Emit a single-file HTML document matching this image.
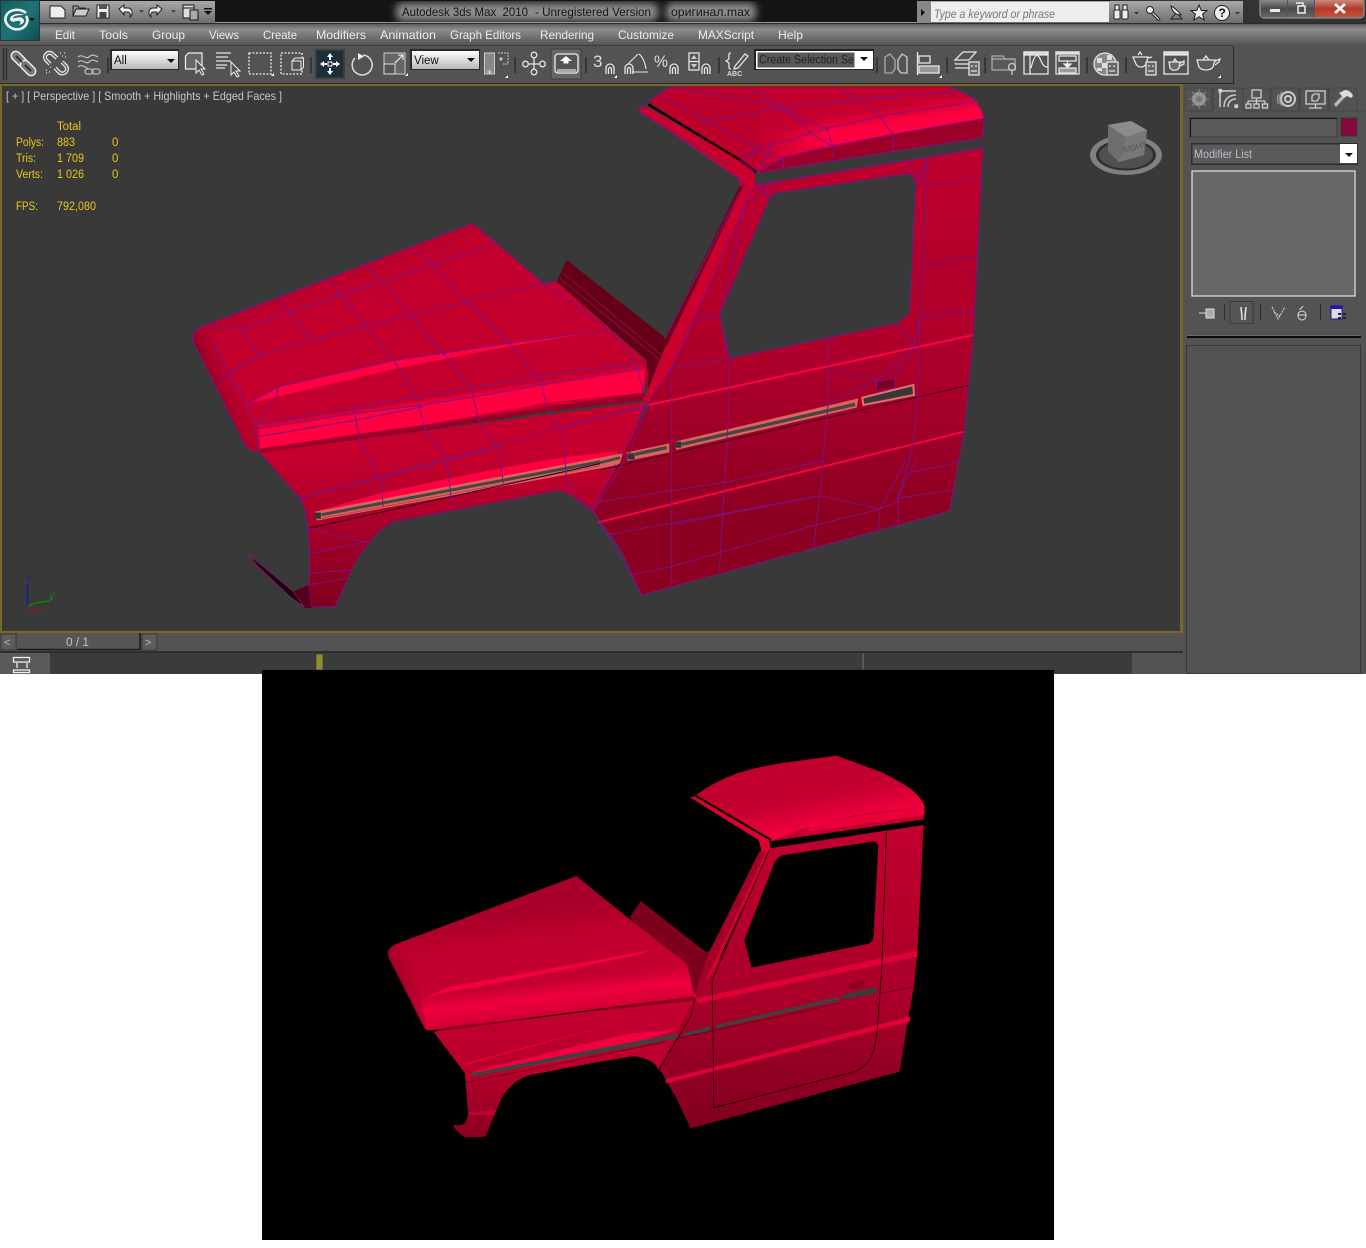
<!DOCTYPE html>
<html><head><meta charset="utf-8"><style>
html,body{margin:0;padding:0;background:#fff;width:1366px;height:1248px;overflow:hidden}
svg{display:block;position:absolute;left:0;top:0}
text{font-family:"Liberation Sans","Noto Sans CJK SC",sans-serif;white-space:pre}
.m{font-size:12px;fill:#ececec}
.y{font-size:11.5px;fill:#e6c820}
.i{fill:none;stroke:#e4e4e4;stroke-width:1.3}
.w{fill:none;stroke:#7c1280;stroke-width:3}
.s{stroke:#2e2e2e;stroke-width:1.5}
</style></head><body>
<svg width="1366" height="1248" viewBox="0 0 1366 1248" xmlns="http://www.w3.org/2000/svg">
<defs>
<linearGradient id="menu" x1="0" y1="0" x2="0" y2="1"><stop offset="0" stop-color="#5c5c5c"/><stop offset=".25" stop-color="#8c8c8c"/><stop offset="1" stop-color="#555"/></linearGradient>
<linearGradient id="qa" x1="0" y1="0" x2="0" y2="1"><stop offset="0" stop-color="#a8a8a8"/><stop offset="1" stop-color="#6e6e6e"/></linearGradient>
<linearGradient id="combo" x1="0" y1="0" x2="0" y2="1"><stop offset="0" stop-color="#fff"/><stop offset="1" stop-color="#b8b8b8"/></linearGradient>
<linearGradient id="teal" x1="0" y1="0" x2="1" y2="1"><stop offset="0" stop-color="#0f5f62"/><stop offset=".5" stop-color="#1c7477"/><stop offset="1" stop-color="#0c4e52"/></linearGradient>
<linearGradient id="close" x1="0" y1="0" x2="0" y2="1"><stop offset="0" stop-color="#c98a80"/><stop offset=".5" stop-color="#b33a28"/><stop offset="1" stop-color="#c8503a"/></linearGradient>
<linearGradient id="winb" x1="0" y1="0" x2="0" y2="1"><stop offset="0" stop-color="#8a8a8a"/><stop offset=".5" stop-color="#4a4a4a"/><stop offset="1" stop-color="#666"/></linearGradient>
<linearGradient id="hood" gradientUnits="userSpaceOnUse" x1="420" y1="90" x2="500" y2="290"><stop offset="0" stop-color="#9c0028"/><stop offset=".6" stop-color="#bf002c"/><stop offset="1" stop-color="#c4002e"/></linearGradient>
<linearGradient id="nose" gradientUnits="userSpaceOnUse" x1="60" y1="500" x2="180" y2="450"><stop offset="0" stop-color="#6a0020"/><stop offset=".5" stop-color="#b0002a"/><stop offset="1" stop-color="#c4002e"/></linearGradient>
<linearGradient id="bright" gradientUnits="userSpaceOnUse" x1="800" y1="525" x2="810" y2="590"><stop offset="0" stop-color="#c4002e"/><stop offset=".3" stop-color="#ff0040"/><stop offset="1" stop-color="#ff0040"/></linearGradient>
<linearGradient id="side" gradientUnits="userSpaceOnUse" x1="0" y1="0" x2="0" y2="1530"><stop offset="0" stop-color="#c2002e"/><stop offset=".55" stop-color="#ad002a"/><stop offset=".85" stop-color="#8c0022"/><stop offset="1" stop-color="#8c0022"/></linearGradient>
<linearGradient id="fender" gradientUnits="userSpaceOnUse" x1="0" y1="700" x2="0" y2="1170"><stop offset="0" stop-color="#c6002e"/><stop offset=".5" stop-color="#a60028"/><stop offset="1" stop-color="#7c001e"/></linearGradient>
<linearGradient id="roof" gradientUnits="userSpaceOnUse" x1="800" y1="40" x2="815" y2="135"><stop offset="0" stop-color="#c2002e"/><stop offset=".4" stop-color="#c8002f"/><stop offset=".9" stop-color="#ff0040"/></linearGradient>
<linearGradient id="roofl" gradientUnits="userSpaceOnUse" x1="470" y1="0" x2="690" y2="0"><stop offset="0" stop-color="#bc002c"/><stop offset="1" stop-color="#c4002e" stop-opacity="0"/></linearGradient>
<linearGradient id="bside" gradientUnits="userSpaceOnUse" x1="0" y1="260" x2="0" y2="1160"><stop offset="0" stop-color="#c0002e"/><stop offset=".6" stop-color="#a80029"/><stop offset="1" stop-color="#80001e"/></linearGradient>
<linearGradient id="bfend" gradientUnits="userSpaceOnUse" x1="0" y1="780" x2="0" y2="1190"><stop offset="0" stop-color="#c4002e"/><stop offset=".5" stop-color="#b8002c"/><stop offset="1" stop-color="#8a0022"/></linearGradient>
<linearGradient id="broof" gradientUnits="userSpaceOnUse" x1="1150" y1="50" x2="1200" y2="280"><stop offset="0" stop-color="#bf002c"/><stop offset=".55" stop-color="#c4002e"/><stop offset="1" stop-color="#f8003e"/></linearGradient>
<linearGradient id="bhood" gradientUnits="userSpaceOnUse" x1="500" y1="500" x2="540" y2="820"><stop offset="0" stop-color="#a80029"/><stop offset=".3" stop-color="#c0002d"/><stop offset=".68" stop-color="#c4002e"/><stop offset=".82" stop-color="#ee003c"/><stop offset=".94" stop-color="#dc0036"/><stop offset="1" stop-color="#c8002f"/></linearGradient>
<linearGradient id="bnose" gradientUnits="userSpaceOnUse" x1="20" y1="770" x2="140" y2="720"><stop offset="0" stop-color="#70001e"/><stop offset="1" stop-color="#c0002c" stop-opacity="0"/></linearGradient>
<filter id="b2"><feGaussianBlur stdDeviation="4"/></filter>
<filter id="b1"><feGaussianBlur stdDeviation=".5"/></filter>
</defs>

<!-- page -->
<rect width="1366" height="1248" fill="#fff"/>
<rect x="0" y="0" width="1366" height="674" fill="#535353"/>

<!-- title bar -->
<rect x="0" y="0" width="1366" height="23" fill="#141414"/>
<rect x="1110" y="0" width="256" height="23" fill="#333"/>
<rect x="215" y="22" width="702" height="1" fill="#9a9a9a"/>
<rect x="0" y="23" width="1366" height="1" fill="#2c2c2c"/>
<rect x="396" y="3" width="262" height="18" rx="6" fill="#8c8c8c" filter="url(#b2)"/>
<rect x="666" y="3" width="90" height="18" rx="6" fill="#8c8c8c" filter="url(#b2)"/>
<text x="402" y="16" font-size="12" fill="#161616" textLength="126" lengthAdjust="spacingAndGlyphs">Autodesk 3ds Max  2010</text>
<text x="535" y="16" font-size="12" fill="#161616" textLength="116" lengthAdjust="spacingAndGlyphs">- Unregistered Version</text>
<text x="671" y="16" font-size="12" fill="#161616" textLength="79" lengthAdjust="spacingAndGlyphs">оригинал.max</text>

<!-- menu -->
<rect x="0" y="24" width="1366" height="21" fill="url(#menu)"/>
<text class="m" x="55" y="39" textLength="20" lengthAdjust="spacingAndGlyphs">Edit</text>
<text class="m" x="99" y="39" textLength="29" lengthAdjust="spacingAndGlyphs">Tools</text>
<text class="m" x="152" y="39" textLength="33" lengthAdjust="spacingAndGlyphs">Group</text>
<text class="m" x="209" y="39" textLength="30" lengthAdjust="spacingAndGlyphs">Views</text>
<text class="m" x="263" y="39" textLength="34" lengthAdjust="spacingAndGlyphs">Create</text>
<text class="m" x="316" y="39" textLength="50" lengthAdjust="spacingAndGlyphs">Modifiers</text>
<text class="m" x="380" y="39" textLength="56" lengthAdjust="spacingAndGlyphs">Animation</text>
<text class="m" x="450" y="39" textLength="71" lengthAdjust="spacingAndGlyphs">Graph Editors</text>
<text class="m" x="540" y="39" textLength="54" lengthAdjust="spacingAndGlyphs">Rendering</text>
<text class="m" x="618" y="39" textLength="56" lengthAdjust="spacingAndGlyphs">Customize</text>
<text class="m" x="698" y="39" textLength="56" lengthAdjust="spacingAndGlyphs">MAXScript</text>
<text class="m" x="778" y="39" textLength="25" lengthAdjust="spacingAndGlyphs">Help</text>

<!-- quick access -->
<rect x="40" y="1" width="175" height="22" fill="url(#qa)"/>
<g fill="#eee" stroke="#222" stroke-width="1">
<path d="M50,6h11l4,4v8h-15z"/>
<path d="M73,16l3,-7h13l-3,7z" fill="#ccc"/><path d="M73,16v-10h5l1,2h6v1" fill="none"/>
<rect x="97" y="5" width="12" height="13"/>
</g>
<rect x="99" y="5" width="8" height="4" fill="#555"/><rect x="99.500" y="12" width="7" height="6" fill="#444"/>
<path d="M119,9l5,-4v3h4c5,0 5,7 2,9c1,-4 -1,-5 -3,-5h-3v3z" fill="#eee" stroke="#222"/>
<path d="M162,9l-5,-4v3h-4c-5,0 -5,7 -2,9c-1,-4 1,-5 3,-5h3v3z" fill="#eee" stroke="#222"/>
<path d="M139,10h5l-2.500,3z M171,10h5l-2.500,3z" fill="#444"/>
<g fill="none" stroke="#222" stroke-width="1.100"><rect x="183" y="5" width="11" height="13" fill="#ddd"/><path d="M183,8h11"/><rect x="190" y="10" width="8" height="10" fill="#aaa"/></g>
<path d="M204,8h8v1.500h-8z M204,11h8l-4,4z" fill="#111"/>

<!-- logo -->
<rect x="0" y="0" width="40" height="41" fill="#333"/>
<rect x="1" y="1" width="38" height="39" fill="url(#teal)"/>
<path d="M26,13C20,8 9,9 6,16C3,24 12,31 20,29C27,27 29,20 26,16" fill="none" stroke="#f2f2f2" stroke-width="2.600"/>
<path d="M24,15C18,12 10,15 10,19C10,22 14,22 17,21C20,20 22,22 19,25C24,24 26,20 22,18C18,16 15,19 13,18C13,16 18,15 24,15Z" fill="#f2f2f2"/>
<path d="M29,18h6l-3,3.500z" fill="#111"/>

<!-- info center -->
<rect x="917" y="1" width="326" height="22" fill="url(#qa)"/>
<rect x="917" y="1" width="14" height="22" fill="#888"/>
<path d="M921,9l4,3.500l-4,3.500z" fill="#111"/>
<rect x="931" y="2" width="178" height="20" fill="#eee"/>
<text x="934" y="18" font-size="11.500" font-style="italic" fill="#777" textLength="121" lengthAdjust="spacingAndGlyphs">Type a keyword or phrase</text>
<g fill="#eee" stroke="#222" stroke-width="1">
<rect x="1114" y="10" width="6" height="9" rx="1"/><rect x="1122" y="10" width="6" height="9" rx="1"/><rect x="1115" y="5" width="4" height="5"/><rect x="1123" y="5" width="4" height="5"/>
<circle cx="1150" cy="10" r="3.500"/><path d="M1153,12l7,7l-1.500,1.500l-7,-7z"/>
<path d="M1171,6c1,6 5,9 10,9c-1,-2 -6,-7 -10,-9z"/><path d="M1176,13l-5,6h11l-4,-5" fill="none"/>
<path d="M1199,5l2.300,5.500h5.700l-4.500,3.700l1.700,5.800l-5.200,-3.300l-5.200,3.300l1.700,-5.800l-4.500,-3.700h5.700z"/>
<circle cx="1222" cy="13" r="7.500"/>
</g>
<text x="1218.500" y="17" font-size="12" font-weight="bold" fill="#111">?</text>
<path d="M1134,12h5l-2.500,2.500z M1235,12h5l-2.500,2.500z" fill="#333"/>

<!-- window buttons -->
<rect x="1260" y="-3" width="104" height="21" rx="4" fill="#555" stroke="#aaa"/>
<rect x="1261" y="0" width="26" height="17" fill="url(#winb)"/>
<rect x="1288" y="0" width="26" height="17" fill="url(#winb)"/>
<rect x="1315" y="0" width="48" height="17" fill="url(#close)"/>
<rect x="1270" y="9" width="10" height="3" fill="#eee"/>
<path d="M1298,6h7v7h-7z M1296,3h7v3" fill="none" stroke="#eee" stroke-width="1.500"/>
<path d="M1335,4l10,9M1345,4l-10,9" stroke="#f4f4f4" stroke-width="2.800" fill="none"/>

<!-- main toolbar -->
<rect x="0" y="45" width="1366" height="39" fill="#535353"/>
<rect x="0" y="45" width="1233" height="1" fill="#3a3a3a"/>
<rect x="1233" y="46" width="1" height="38" fill="#2a2a2a"/>
<rect x="0" y="83" width="1233" height="1" fill="#2a2a2a"/>
<path d="M3.500,48v32M6.500,48v32" stroke="#2a2a2a" stroke-width="1.300"/>
<path d="M108,57v16M311,57v16M515,57v16M586,57v16M719,57v16M877,57v16M947,57v16M985,57v16M1087,57v16M1126,57v16" class="s" fill="none"/>

<!-- link -->
<g fill="#777" stroke="#eee" stroke-width="1.500">
<rect x="10" y="54.500" width="18" height="9" rx="4.500" transform="rotate(45 19 59)"/>
<rect x="19" y="63.500" width="18" height="9" rx="4.500" transform="rotate(45 28 68)"/>
</g>
<path d="M16,56l6,6M25,65l6,6" stroke="#333" stroke-width="2"/>
<!-- unlink -->
<g fill="none">
<path d="M50,64L46,60C43,56 47,52 51,53L57,58" stroke="#eee" stroke-width="4"/>
<path d="M50,64L46,60C43,56 47,52 51,53L57,58" stroke="#666" stroke-width="1.600"/>
<path d="M62,62L66,66C69,70 65,75 60,73L55,68" stroke="#eee" stroke-width="4"/>
<path d="M62,62L66,66C69,70 65,75 60,73L55,68" stroke="#666" stroke-width="1.600"/>
<path d="M60,53h1M64,53h1M62,56h1M65,57h1M46,70h1M49,72h1M46,73h1M50,67h1" stroke="#ddd" stroke-width="1.300"/>
</g>
<!-- bind -->
<g class="i" style="stroke:#bbb">
<path d="M78,57c4,-4 8,3 11,0s5,-2 9,0M78,62c4,-4 8,3 11,0s5,-2 9,0M78,67c4,-4 8,2 10,1"/>
<rect x="85" y="69" width="8" height="5" rx="2.500"/><rect x="92" y="69" width="8" height="5" rx="2.500"/>
</g>

<!-- combo All -->
<rect x="110" y="49" width="69" height="21" fill="#2a2a2a"/>
<rect x="112" y="51" width="66" height="18" fill="url(#combo)"/>
<text x="114" y="64" font-size="11.500" fill="#111">All</text>
<path d="M167,59h8l-4,4z" fill="#111"/>

<!-- select icons -->
<path d="M185.500,56l3,-3h13.500v16h-16.500z" fill="#666" stroke="#eee" stroke-width="1.200"/>
<path d="M216,53h15M216,57h12M216,61h15M216,65h11M216,68h9" class="i"/>
<path d="M196,60l0,13l3,-3l3,5l2,-1l-3,-5h4z" fill="#535353" stroke="#eee"/>
<path d="M231,62l0,13l3,-3l3,5l2,-1l-3,-5h4z" fill="#535353" stroke="#eee"/>
<rect x="249" y="53" width="22" height="21" fill="none" stroke="#eee" stroke-dasharray="2 1.500" stroke-width="1.300"/>
<path d="M271,76l3,-3v3z" fill="#fff"/>
<rect x="281" y="53" width="21" height="21" fill="none" stroke="#eee" stroke-dasharray="2 1.500" stroke-width="1.300"/>
<path d="M292,61h9v9h-9z M292,61l3,-3h8.500v9l-2.500,3" fill="#555" stroke="#eee"/>

<!-- move -->
<rect x="315" y="49" width="30" height="30" fill="#3c3c3c"/>
<rect x="317" y="51" width="26" height="26" fill="#1d2d3b"/>
<rect x="328" y="62" width="4" height="4" fill="none" stroke="#fff"/>
<path d="M330,53l-3,4h2v3h2v-3h2z M330,75l-3,-4h2v-3h2v3h2z M320,64l4,-3v2h3v2h-3v2z M340,64l-4,-3v2h-3v2h3v2z" fill="#fff"/>
<!-- rotate -->
<path d="M363,55a10,10 0 1 1 -8,3" fill="none" stroke="#ddd" stroke-width="1.500"/>
<path d="M358,53l6,3.500l-6,3.500z" fill="#eee"/>
<!-- scale -->
<rect x="384" y="53" width="21" height="21" fill="#666" stroke="#ccc"/>
<rect x="384" y="64" width="11" height="10" fill="#555" stroke="#ddd"/>
<path d="M395,63l8,-8M398,55h5v5" fill="none" stroke="#fff"/>
<path d="M405,76l3,-3v3z" fill="#fff"/>

<!-- combo View -->
<rect x="410" y="49" width="70" height="21" fill="#2a2a2a"/>
<rect x="412" y="51" width="67" height="18" fill="url(#combo)"/>
<text x="414" y="64" font-size="11.500" fill="#111">View</text>
<path d="M467,58h8l-4,4z" fill="#111"/>

<!-- pivot -->
<rect x="484.500" y="53" width="10" height="21" fill="#888" stroke="#ccc"/>
<path d="M498,53h10v11h-5" fill="none" stroke="#ccc" stroke-dasharray="2 1"/><path d="M499,59h4M501,57v4M487,72h5M489.500,69.500v5" stroke="#ddd" fill="none"/>
<path d="M505,78l3,-3v3z" fill="#fff"/>
<!-- manipulate -->
<g class="i"><path d="M534,52v22M523,64h22"/><circle cx="534" cy="55" r="2.800" fill="#535353"/><circle cx="534" cy="72" r="2.800" fill="#535353"/><circle cx="525.500" cy="64" r="2.800" fill="#535353"/><circle cx="542.500" cy="64" r="2.800" fill="#535353"/></g>
<!-- kbd -->
<rect x="551" y="49" width="30" height="30" fill="#686868" stroke="#3c3c3c"/>
<rect x="555" y="54" width="23" height="19" rx="3" fill="#555" stroke="#eee" stroke-width="1.300"/>
<rect x="557" y="69" width="19" height="3" fill="#aaa"/>
<path d="M566,56l6,5h-3.500v2.500h-5v-2.500h-3.500z" fill="#fff"/>
<!-- snaps -->
<text x="593" y="67" font-size="17" fill="#ddd">3</text>
<g class="i" stroke-width="1.400">
<path d="M606,74v-6a4,4 0 0 1 8,0v6M608.500,74v-5a1.500,1.500 0 0 1 3,0v5"/>
<path d="M625,74v-6a4,4 0 0 1 8,0v6M627.500,74v-5a1.500,1.500 0 0 1 3,0v5"/>
<path d="M628,64l10,-10M632,72h16M639,54c4,3 6,9 7,15" stroke-width="1.100"/>
<path d="M670,74v-6a4,4 0 0 1 8,0v6M672.500,74v-5a1.500,1.500 0 0 1 3,0v5"/>
<path d="M702,74v-6a4,4 0 0 1 8,0v6M704.500,74v-5a1.500,1.500 0 0 1 3,0v5"/>
<rect x="689" y="53" width="10" height="17"/><path d="M689,61.500h10"/>
</g>
<path d="M694,55l3,4h-6z M694,68l3,-4h-6z" fill="#ccc"/>
<text x="654" y="67" font-size="17" fill="#ddd" textLength="14" lengthAdjust="spacingAndGlyphs">%</text>
<path d="M614,78l3,-3v3z" fill="#fff"/>
<!-- named set -->
<g class="i" stroke-width="1.200"><path d="M731,53c-3,0 -2,3 -2,5s-2,2 -3,3c1,1 3,1 3,3s-1,5 2,5"/><path d="M735,66l10,-12l3,2l-10,12l-4,1z"/></g>
<text x="727" y="76" font-size="7" font-weight="bold" fill="#ddd">ABC</text>
<!-- create selection -->
<rect x="754" y="49" width="120" height="21" fill="#222"/>
<rect x="756" y="51" width="117" height="18" fill="#fff"/>
<rect x="757.500" y="52.500" width="97" height="15" fill="#585858"/>
<text x="759" y="63.500" font-size="11.500" fill="#222" textLength="95" lengthAdjust="spacingAndGlyphs">Create Selection Se</text>
<path d="M860,57h8l-4,4z" fill="#111"/>
<!-- mirror / align -->
<g class="i">
<path d="M885,73v-16l5,-3l5,6v9l-3,4z" stroke="#aaa"/><path d="M907,73v-16l-5,-3l-4,6v9l3,4z" stroke="#ccc"/>
<path d="M917.500,52v23"/><rect x="919" y="56" width="11" height="7"/><rect x="919" y="66" width="20" height="7" fill="#999"/>
</g>
<path d="M939,78l3,-3v3z" fill="#fff"/>
<!-- layers -->
<g class="i" stroke-width="1.100">
<path d="M955,60l8,-8h13l-7,8z M955,64l1,-1M955,64h14M955,68h14"/>
<rect x="969" y="62" width="10" height="13" fill="#666"/><path d="M971,71h6M971,66h2M975,66h2"/>
<path d="M992,56h11l2,3h10v11h-23z" stroke="#aaa" fill="#5a5a5a"/><path d="M992,59h23" stroke="#aaa"/>
<circle cx="1012" cy="67" r="3.500" stroke="#ccc"/><path d="M1012,70v5" stroke="#ccc"/>
<rect x="1024" y="52" width="24" height="22"/><rect x="1024" y="52" width="24" height="3" fill="#ddd"/>
<path d="M1030,55v19M1031,68c5,-20 8,-12 11,-5c2,4 4,4 6,4"/>
<rect x="1056" y="52" width="23" height="22"/><rect x="1056" y="52" width="23" height="2" fill="#ddd"/>
<rect x="1059" y="56" width="17" height="5"/><path d="M1067.500,61v5"/><path d="M1064,64h7l-3.500,3.500z" fill="#fff"/>
<rect x="1059" y="68" width="17" height="5" fill="#999"/>
<circle cx="1105" cy="64" r="11" fill="#888"/>
<path d="M1097,58h5v5h-5z M1107,55h5v5h-5z M1102,63h5v5h-5z M1097,68h5v3h-5z M1112,63h4v5h-4z" fill="#ddd" stroke="none"/>
<rect x="1107" y="62" width="11" height="13" fill="#666"/><path d="M1109,71h6M1109,66h2M1113,66h2"/>
<path d="M1133,57h15l-2,7c-2,4 -8,4 -10,0z M1148,58l4,-1M1138,55l2,-3l2,3"/>
<rect x="1146" y="62" width="10" height="13" fill="#666"/><path d="M1148,71h6M1148,66h2M1152,66h2"/>
<rect x="1164" y="52" width="24" height="22"/><rect x="1164" y="52" width="24" height="3" fill="#ddd"/>
<path d="M1169,62h11l-1,6c-2,3 -7,3 -9,0z M1180,63l4,-2l0,3l-4,2M1173,62l2,-3l2,3" fill="#6c6c6c"/>
<path d="M1197,60h18l-2,7c-3,4 -11,4 -14,0z M1215,61l5,-2l-1,3l-4,3M1203,60l3,-4l3,4" fill="#5c5c5c"/>
</g>
<path d="M1218,78l3,-3v3z" fill="#fff"/>

<!-- viewport -->
<rect x="0" y="84" width="1183" height="549" fill="#7a6828"/>
<rect x="2" y="86" width="1178" height="545" fill="#393939"/>
<text x="6" y="100" font-size="12" fill="#c8c8c8" textLength="276" lengthAdjust="spacingAndGlyphs">[ + ] [ Perspective ] [ Smooth + Highlights + Edged Faces ]</text>
<text class="y" x="57" y="130" textLength="24" lengthAdjust="spacingAndGlyphs">Total</text>
<text class="y" x="16" y="146" textLength="28" lengthAdjust="spacingAndGlyphs">Polys:</text><text class="y" x="57" y="146" textLength="18" lengthAdjust="spacingAndGlyphs">883</text><text class="y" x="112" y="146">0</text>
<text class="y" x="16" y="162" textLength="20" lengthAdjust="spacingAndGlyphs">Tris:</text><text class="y" x="57" y="162" textLength="27" lengthAdjust="spacingAndGlyphs">1 709</text><text class="y" x="112" y="162">0</text>
<text class="y" x="16" y="178" textLength="27" lengthAdjust="spacingAndGlyphs">Verts:</text><text class="y" x="57" y="178" textLength="27" lengthAdjust="spacingAndGlyphs">1 026</text><text class="y" x="112" y="178">0</text>
<text class="y" x="16" y="210" textLength="22" lengthAdjust="spacingAndGlyphs">FPS:</text><text class="y" x="57" y="210" textLength="39" lengthAdjust="spacingAndGlyphs">792,080</text>

<!-- view cube -->
<ellipse cx="1126" cy="155" rx="36" ry="20" fill="#808080"/>
<ellipse cx="1126" cy="155" rx="30" ry="15.500" fill="#2e2e2e"/>
<ellipse cx="1126" cy="155" rx="27" ry="13.500" fill="#505050"/>
<path d="M1108,125l23,-4l16,9l-3,25l-25,7l-11,-11z" fill="#828282"/>
<path d="M1108,125l23,-4l16,9l-21,7z" fill="#8c8c8c"/>
<path d="M1126,137l21,-7l-3,25l-25,7z" fill="#777"/>
<path d="M1108,125l18,12l-7,25l-11,-11z" fill="#6e6e6e"/>
<text x="1123" y="153" font-size="8" fill="#555" transform="rotate(-14 1123 153)">RIGHT</text>
<!-- axes -->
<path d="M27.500,584V607" stroke="#1010c8" stroke-width="1.200" fill="none"/>
<path d="M27.500,606l8,-3l14,-2l3,-3" stroke="#0a8a0a" stroke-width="1.300" fill="none"/>
<path d="M27.500,607l10,6" stroke="#c01010" stroke-width="1.200" fill="none" stroke-dasharray="3 1"/>
<text x="27" y="580" font-size="8.500" fill="#1414c0">z</text>
<text x="50" y="597" font-size="8.500" fill="#0a8a0a">y</text>
<text x="39" y="611" font-size="8.500" fill="#b01010">x</text>

<!-- ============ top car: hood/fender (crop A coords) ============ -->
<g transform="translate(180,220) scale(.33333)">
<path d="M1160,120L1130,185L1400,420L1405,540L1395,545L1460,405L1452,350Z" fill="#640018"/>
<path d="M1150,160L1445,405M1140,175L1440,420M1405,470L1400,530" stroke="#8a1038" stroke-width="3" fill="none"/>
<path d="M240,697L1398,545L1320,760L1240,875L1180,830Q1150,812 1130,812L640,905Q600,925 570,965Q535,1005 515,1050L465,1160L372,1165L355,1108Q385,1100 388,1080Q392,1050 385,925L380,890Q375,860 360,835Z" fill="url(#fender)"/>
<path d="M70,318L878,10L1090,190L1130,185L1395,420L1405,460L1390,520L240,690Q218,698 200,680Q190,670 185,655L42,370Q30,335 70,318Z" fill="url(#hood)"/>
<path d="M42,370Q30,335 70,318L95,360L225,620L235,690Q218,698 200,680Q190,670 185,655Z" fill="url(#nose)"/>
<path d="M205,550L295,500L640,422L790,400L985,370L1280,330L985,380L800,416L640,448L460,490L295,530Z" fill="#ff0040"/>
<path d="M235,612L520,565L715,530L875,505L1075,470L1370,430L1395,445L1390,518L1105,548L900,585L730,615L540,640L240,685Z" fill="url(#bright)"/>
<path d="M240,688L1390,518L1398,540L1105,575L735,632L240,698Z" fill="#96002a"/>
<path d="M420,870L600,820L810,775L960,745L1150,712L1310,695L1320,708L960,775L600,845L425,878Z" fill="#ff0042"/>
<path d="M405,875L1328,700L1315,735L410,902Z" fill="#d8645c"/>
<path d="M425,884L1310,716" stroke="#454545" stroke-width="9" fill="none"/>
<path d="M425,895L1310,728" stroke="#b82e40" stroke-width="2" fill="none"/>
<path d="M385,925L1400,700" stroke="#2e0022" stroke-width="3" fill="none"/>
<rect x="405" y="878" width="18" height="18" fill="#333"/>
<path d="M360,835L1400,555" stroke="#8a1068" stroke-width="5" stroke-dasharray="6 3" fill="none"/>
<path class="w" d="M70,318L878,10L1090,190L1130,185M42,370Q30,335 70,318M42,370L185,655Q190,670 200,680Q218,698 240,697M240,697L360,835Q375,860 380,890L385,925Q392,1050 388,1080Q385,1100 355,1108L372,1162L465,1160L515,1050Q535,1005 570,965Q600,925 640,905L1130,812Q1150,812 1180,830L1240,875L1310,990L1385,1125"/>
<path class="w" d="M65,320L185,325L950,70M185,325L235,405L555,318L1090,190M235,405L110,485M95,360L235,620M290,225L330,275L395,360M435,170L485,225L555,318L640,420L710,530L735,630M550,128L610,190L690,285L790,400L875,510L895,600M690,80L760,135L860,245L985,370L1080,480L1105,570M1090,190L1290,330L1370,430L1390,520M295,500L640,422L985,370L1280,330M205,550L295,500L290,530L225,620L235,690M235,610L520,565L715,530L875,505L1075,470L1370,430M235,625L525,580L725,555L885,530L1080,495L1385,445M235,650L530,600L730,560M520,565L540,660L600,775L610,860M735,630L800,720L815,850M895,600L955,680L970,790M1105,570L1150,640L1160,790M1140,625L1395,560M360,835L960,680M385,925L570,970M390,1000L560,965M385,1060L510,1050M385,1095L500,1075M385,1095L395,1165M1395,560L1235,870L1160,790M1330,700L1295,780"/>
<!-- detached strip -->
<path d="M340,1115L385,1095L395,1165L372,1162Z" fill="#55001a"/>
<path d="M205,1005L250,1040L340,1115L372,1160L330,1130L235,1040Z" fill="#1a000e" stroke="#9a0f80" stroke-width="2"/>
</g>

<!-- ============ top car: door / roof (crop B coords) ============ -->
<g transform="translate(600,85) scale(.33333)">
<path fill-rule="evenodd" d="M470,300L1148,190L1120,750L1092,1040L1048,1278L125,1530L60,1390L0,1310L-20,1280L145,960L190,855L215,790L420,300L465,290ZM510,335Q520,325 540,322L930,265L948,290L930,680L895,715L390,820L358,690Z" fill="url(#side)"/>
<!-- pillar -->
<path d="M115,75L140,65L440,240Q468,262 465,285L460,310L215,850L140,960L130,945L190,800L420,305L415,280Z" fill="#cc002e"/>
<path d="M418,305L190,770L200,785L432,300Z" fill="#72001c"/>
<path d="M115,77L390,245" stroke="#a0103c" stroke-width="8"/>
<!-- trim rows & strakes -->
<path d="M145,960L1120,750" stroke="#ff0048" stroke-width="6"/>
<path d="M-5,1312L1092,1040" stroke="#ff0048" stroke-width="6"/>
<path d="M0,1155L1110,900" stroke="#40002c" stroke-width="3"/>
<path d="M225,1070L775,940L770,968L228,1095Z" fill="#d8645c"/>
<path d="M245,1078L765,958" stroke="#454545" stroke-width="10"/>
<rect x="226" y="1070" width="18" height="18" fill="#333"/>
<path d="M80,1102L208,1075L208,1102L82,1128Z" fill="#d8645c"/><path d="M105,1108L200,1088" stroke="#454545" stroke-width="10"/><rect x="82" y="1105" width="22" height="18" fill="#333"/>
<path d="M0,1125L68,1105L60,1135L0,1150Z" fill="#d8645c"/><path d="M0,1133L60,1118" stroke="#454545" stroke-width="8"/>
<path d="M830,890L885,880V908L830,918Z" fill="#7a0020" stroke="#7c1280" stroke-width="3"/>
<path d="M787,938L940,900L942,930L790,960Z" fill="#383838" stroke="#e8706a" stroke-width="6"/>
<!-- roof -->
<path d="M145,50Q175,25 215,5L1045,5Q1110,30 1130,50Q1148,75 1152,100L1147,158L470,265L440,240Z" fill="url(#roof)"/>
<path d="M145,50Q175,25 215,5L700,5V180L550,215L470,265L440,240Z" fill="url(#roofl)"/>
<path d="M470,265L1147,158L1152,100L880,148L700,185L550,215Z" fill="#9c0028"/>
<path d="M145,58L420,225L470,262" stroke="#1c000a" stroke-width="8" fill="none"/>
<!-- wires -->
<path class="w" d="M145,50Q175,25 215,5M115,75L140,55M420,225L470,262L1147,158L1152,100Q1148,75 1130,50Q1110,30 1045,5M115,75L415,280Q440,295 420,305M465,285L470,300L1148,190L1120,750L1092,1040L1048,1278L125,1530L60,1390M510,335Q520,325 540,322L930,265L948,290L930,680L895,715L390,820L358,690Z"/>
<path class="w" d="M215,5L520,60L680,130L700,190M440,5L540,60L640,150L700,185M710,5L820,70L880,150V195M180,30L490,200L560,230M420,215L500,185L680,130L860,90L1130,50M300,115L530,70L800,40L1070,20M470,255L560,215L680,185L880,148L1152,100M550,220V250M700,190V220M480,250L500,215L520,170M440,225L480,190"/>
<path class="w" d="M465,295L215,850L140,960M420,320L195,760M215,850V1500M215,850L385,820L358,690L280,710L215,850M385,820V1000L358,1460M685,760V950L660,1230L640,1390M980,220L960,700L950,1000L930,1120L890,1250L840,1272L630,1325L215,1445L90,1470M895,1320V1240L1060,1215M835,1335L840,1272L660,1232L215,1320M660,1232L20,1350M975,540L1135,515M980,300L1145,280M960,705L1125,670M920,225L950,280M980,225L950,290M980,225L960,300M895,715L940,785L960,700M940,790L830,885L685,850M940,800L880,880M830,885L680,960M0,1250L385,1190L665,1128M920,1165L1080,1130M920,1120L840,1272M950,1120L895,1235M500,330L440,345L360,690M470,300L510,335M470,320L520,290M540,285L510,320"/>
<path class="w" d="M-20,1280L90,1100L145,960M-20,1280L60,1390" stroke-width="2.500"/>
</g>

<!-- time slider -->
<rect x="0" y="633" width="1186" height="19" fill="#535353"/>
<rect x="1" y="634" width="15" height="16" fill="#5c5c5c" stroke="#3a3a3a"/>
<rect x="17" y="633" width="122" height="16" fill="#565656"/>
<path d="M17,649.500H140V633" stroke="#1a1a1a" fill="none" stroke-width="1.500"/>
<rect x="142" y="634" width="15" height="16" fill="#5c5c5c" stroke="#3a3a3a"/>
<text x="4" y="646" font-size="11" fill="#bbb">&lt;</text>
<text x="145" y="646" font-size="11" fill="#bbb">&gt;</text>
<text x="66" y="646" font-size="11.500" fill="#bcc4cc" textLength="23" lengthAdjust="spacingAndGlyphs">0 / 1</text>
<rect x="0" y="651" width="1186" height="2" fill="#2e2e2e"/>
<rect x="0" y="653" width="1186" height="21" fill="#3b3b3b"/>
<rect x="0" y="653" width="50" height="21" fill="#5a5a5a"/>
<rect x="1132" y="653" width="54" height="21" fill="#535353"/>
<rect x="316" y="654" width="7" height="16" fill="#8c8c32" stroke="#333" stroke-width=".6"/>
<path d="M863,653v16" stroke="#777"/>
<g fill="none" stroke="#eee" stroke-width="1.300"><rect x="13.500" y="657.500" width="16" height="4.500"/><rect x="13.500" y="670" width="16" height="2.500"/><path d="M17,668v-5M27,663v5"/></g>

<!-- command panel -->
<rect x="1183" y="84" width="183" height="590" fill="#535353"/>
<path d="M1185,110V91q0,-3 3,-3h21q3,0 3,3V110 M1213,110V91q0,-3 3,-3h24q3,0 3,3V110 M1243,110V91q0,-3 3,-3h21q3,0 3,3V110M1271,110V91q0,-3 3,-3h22q3,0 3,3V110M1300,110V91q0,-3 3,-3h22q3,0 3,3V110M1329,110V91q0,-3 3,-3h22q3,0 3,3V110" fill="none" stroke="#444"/>
<path d="M1183,111H1213M1243,111H1366" stroke="#444"/>
<circle cx="1199" cy="99" r="7" fill="#999"/><path d="M1199,89v20M1189,99h20M1192,92l14,14M1206,92l-14,14" stroke="#888"/><circle cx="1199" cy="99" r="3" fill="#777"/>
<g fill="none" stroke="#ccc" stroke-width="1.300">
<path d="M1220,107V94q0,-3 3,-3h13M1224,107c0,-8 5,-12 12,-12M1228,107c0,-5 3,-8 8,-8" stroke-width="1.500"/>
<rect x="1219" y="89.500" width="2.500" height="2.500" fill="#ddd"/><rect x="1235" y="105" width="2.500" height="2.500" fill="#ddd"/>
<rect x="1252" y="90" width="9" height="8"/><path d="M1256.500,98v3M1248,101h17M1248,101v3M1256.500,101v3M1265,101v3"/><rect x="1246" y="104" width="5" height="4"/><rect x="1254" y="104" width="5" height="4"/><rect x="1262.500" y="104" width="5" height="4"/>
<circle cx="1288" cy="99" r="7" stroke-width="2"/><circle cx="1288" cy="99" r="3" stroke-width="2"/><path d="M1279,94c-2,3 -2,7 0,10M1282,92c-3,4 -3,10 0,14" stroke="#999"/>
<rect x="1306" y="91" width="19" height="13"/><path d="M1315.500,104v4M1309,108h13M1312,101v-5l2,-2h5v4l-2,3z"/>
</g>
<path d="M1334,104l10,-10l2,2l-10,11z" fill="#bbb"/><path d="M1339,93l6,-3c4,0 7,3 8,6l-2,2l-4,-2l-3,2z" fill="#ddd"/>
<rect x="1190" y="118" width="147" height="19" fill="#5a5a5a" stroke="#3a3a3a"/>
<path d="M1190.500,137V118.500H1337" stroke="#111" fill="none"/>
<rect x="1341" y="118" width="16" height="18" fill="#85083c" stroke="#3a3a3a"/>
<rect x="1191" y="143" width="167" height="22" fill="#2e2e2e"/>
<rect x="1192.500" y="144.500" width="164" height="19" fill="#5a5a5a"/>
<rect x="1340" y="144" width="17" height="19" fill="#fff"/>
<path d="M1345,153h8l-4,4z" fill="#111"/>
<text x="1194" y="158" font-size="12" fill="#b6bece" textLength="58" lengthAdjust="spacingAndGlyphs">Modifier List</text>
<rect x="1192" y="171" width="163" height="125" fill="#676767" stroke="#e4e4e4" stroke-width="1.200"/>
<!-- stack buttons -->
<path d="M1224.500,304v16M1260.500,304v16M1320.500,304v16" stroke="#2c2c2c"/>
<rect x="1230" y="301.500" width="23" height="22" fill="#555" stroke="#3a3a3a"/>
<path d="M1199,313h7M1206,309h8v9h-8z" fill="#aaa" stroke="#ddd"/>
<path d="M1241,307c0,4 1,4 1,13M1246,307c0,4 -1,4 -1,13" stroke="#ddd" stroke-width="1.600" fill="none"/>
<path d="M1272,307l6,12l7,-12M1274,312l6,4" fill="none" stroke="#ddd" stroke-dasharray="2 1"/>
<rect x="1298" y="311" width="8" height="9" rx="4" fill="none" stroke="#ddd"/><path d="M1300,310c0,-3 3,-2 3,-4M1298,315h8" stroke="#ddd" fill="none"/>
<rect x="1331" y="306" width="11" height="13" fill="#ddd" stroke="#1818b0"/><rect x="1331" y="306" width="11" height="3" fill="#1818b0"/>
<path d="M1338,313h3v2h-3z M1343,313h3v2h-3z M1338,317h3v2h-3z M1343,317h3v2h-3z" fill="#222"/>
<!-- rollout -->
<rect x="1187" y="335" width="174" height="1" fill="#6a6a6a"/>
<rect x="1187" y="336" width="174" height="2" fill="#0e0e0e"/>
<rect x="1186.500" y="345.500" width="174" height="328" fill="#535353" stroke="#383838"/>

<!-- ============ render window ============ -->
<rect x="0" y="674" width="1366" height="574" fill="#fff"/>
<rect x="262" y="670" width="792" height="570" fill="#000"/>
<g transform="translate(380,740) scale(.35714,.33333)" filter="url(#b1)">
<path d="M730,483L915,638L935,625L890,770L880,785L700,530Z" fill="#7a001e"/>
<path d="M750,510L905,640M720,525L885,680" stroke="#930024" stroke-width="3" fill="none"/>
<!-- body -->
<path fill-rule="evenodd" d="M1090,325L1522,255L1505,630L1495,740L1480,830L1455,995L870,1165L830,1075L795,1010Q770,965 750,960Q720,945 700,950L600,968L420,1005Q390,1015 375,1030Q350,1055 340,1075L295,1190L240,1192Q215,1180 205,1155Q235,1160 240,1145Q250,1130 245,1100L238,1000L150,875L880,770L960,640ZM1130,345L1380,305Q1396,305 1395,320L1382,590Q1380,608 1365,612L1040,683L1020,600L1100,380Q1110,350 1130,345Z" fill="url(#bside)"/>
<!-- fender -->
<path d="M150,875L880,775L780,990Q770,965 750,960Q720,945 700,950L600,968L420,1005Q390,1015 375,1030Q350,1055 340,1075L295,1190L240,1192Q215,1180 205,1155Q235,1160 240,1145Q250,1130 245,1100L238,1000Z" fill="url(#bfend)"/>
<!-- pillar -->
<path d="M868,172L885,168L1090,298L1093,325L1060,400L935,690L882,775L880,770L920,640L1068,330L1060,300Z" fill="#d8002f"/>
<path d="M1062,335L920,640L880,770L895,760L1000,520L1080,335Z" fill="#a20028"/>
<!-- roof -->
<path d="M885,165Q935,125 1000,100Q1060,80 1120,70L1278,47L1400,95Q1470,130 1500,160Q1520,180 1525,200L1522,238L1095,303Z" fill="url(#broof)"/>
<path d="M1095,303L1522,238L1525,200L1330,225L1170,270Z" fill="#c0002d"/>
<path d="M1200,250L1525,200L1525,225L1200,275Z" fill="#ff0040" opacity=".65"/>
<path d="M885,168L1095,300" stroke="#000" stroke-width="6"/>
<!-- hood -->
<path d="M22,640Q22,622 50,610L550,408L690,530L860,670L885,770L880,770L150,870Q130,875 125,865L30,665Q22,650 22,640Z" fill="url(#bhood)"/>
<path d="M22,640Q22,622 50,610L90,640L130,860L125,865L30,665Q22,650 22,640Z" fill="url(#bnose)"/>
<path d="M125,775L190,742L770,628L700,650L280,740L190,755Z" fill="#f40040"/>
<path d="M150,875L880,770L875,782L200,860Z" fill="#8a0022"/>
<path d="M310,548L530,470" stroke="#98002a" stroke-width="2"/>
<path d="M690,530L860,670L880,760" stroke="#7a0020" stroke-width="2" fill="none"/>
<!-- fender lights -->
<path d="M235,970L870,790L780,815L240,975Z" fill="#ff0040" opacity=".6"/>
<path d="M260,995L520,925L700,880L830,870L700,915L500,965L260,1005Z" fill="#f00040"/>
<path d="M255,1000L835,880L832,895L258,1010Z" fill="#404040"/>
<path d="M240,1028L800,905" stroke="#50001a" stroke-width="2"/>
<path d="M848,880L925,858L925,872L850,888Z" fill="#404040"/>
<path d="M940,855L1285,770L1285,782L942,865Z" fill="#404040"/>
<path d="M1292,765L1390,740V760L1296,778Z" fill="#3a3a3a"/>
<path d="M1315,730q20,-10 40,-5v15l-40,10z" fill="#8a0022"/>
<!-- door strakes -->
<path d="M885,775L1505,632V650L890,790Z" fill="#e00036"/>
<path d="M800,1018L1484,830V845L800,1030Z" fill="#e00036"/>
<path d="M245,1118L325,1110L320,1125L250,1125Z" fill="#e0003a" opacity=".6"/>
<!-- door seams -->
<path d="M1418,275L1405,690L1392,870C1385,950 1370,985 1310,1000L935,1103L930,720L1090,330" stroke="#140008" stroke-width="2.200" fill="none"/>
<path d="M882,775L870,830L780,990" stroke="#140008" stroke-width="2" fill="none"/>
<path d="M1400,760L1495,740M840,893L1290,790" stroke="#50001a" stroke-width="2" fill="none"/>
</g>
</svg>
</body></html>
